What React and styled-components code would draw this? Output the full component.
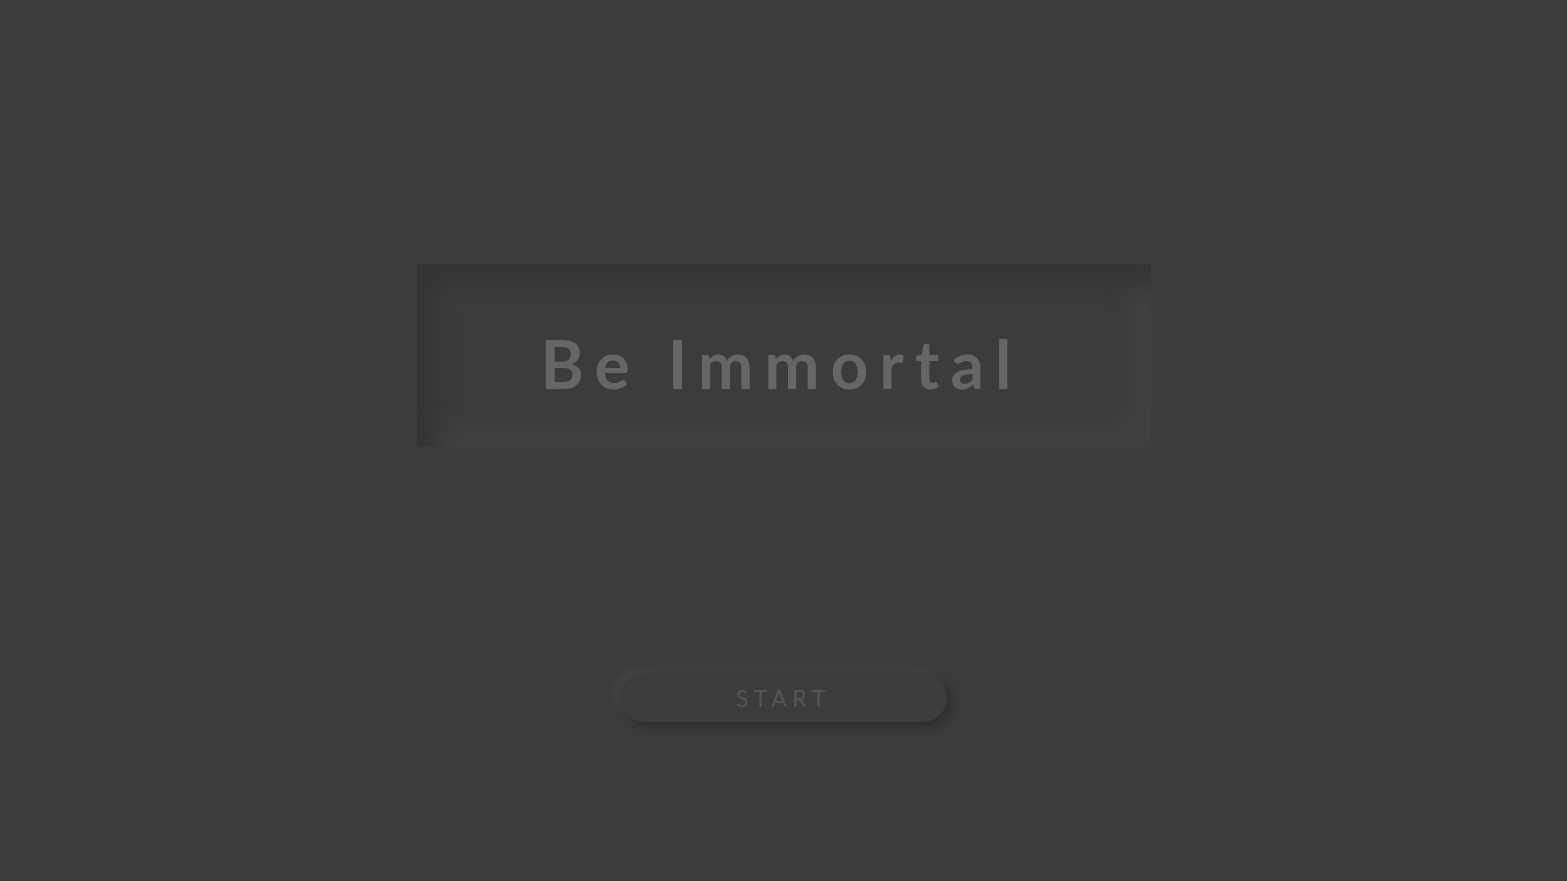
import React from "react";
import styled, { createGlobalStyle } from "styled-components";

const GlobalStyle = createGlobalStyle`
  html, body {
    margin: 0;
    padding: 0;
    background: #d4d4d4;
  }
`;

const Page = styled.div`
  height: 881px;
  display: flex;
  flex-direction: column;
  align-items: center;
  padding-top: 264px;
  box-sizing: border-box;
  gap: 226px;
  background: #3c3c3c;
  font-family: "Lato", "Noto Sans", sans-serif;
`;

const TitleBox = styled.div`
  width: 734px;
  height: 183px;
  display: flex;
  align-items: center;
  justify-content: center;
  background: #3c3c3c;
  box-shadow: inset 20px 20px 22px #353535, inset -20px -20px 22px #424242;
`;

const Title = styled.h1`
  margin: 0 0 0 -4px;
  font-size: 66px;
  font-weight: 700;
  letter-spacing: 11px;
  color: #666666;
  padding-top: 16px;
`;

const StartButton = styled.button`
  width: 327px;
  height: 49px;
  border: none;
  border-radius: 25px;
  background: #3c3c3c;
  box-shadow: 6px 6px 10px #2f2f2f, -5px -5px 10px #444444;
  color: #555555;
  font-family: inherit;
  font-size: 23px;
  font-weight: 400;
  letter-spacing: 0.24em;
  padding-left: 0.24em;
  cursor: pointer;
`;

const App = () => {
  return (
    <>
      <GlobalStyle />
      <Page>
        <TitleBox>
          <Title>Be Immortal</Title>
        </TitleBox>
        <StartButton>START</StartButton>
      </Page>
    </>
  );
};

export default App;
